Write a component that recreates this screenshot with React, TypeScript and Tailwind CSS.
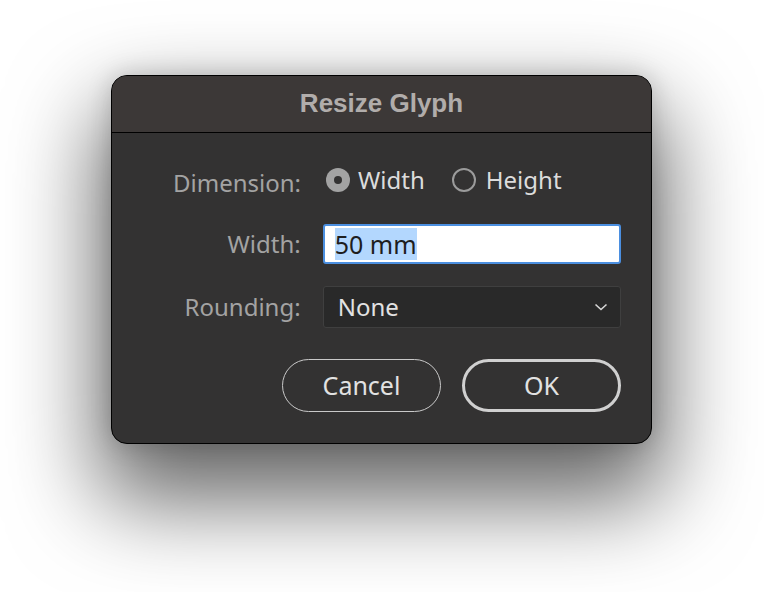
export default function App() {
  return (
    <div className="w-[764px] h-[592px] bg-white overflow-hidden pt-[75px] pl-[111px] font-['Noto_Sans',sans-serif]">
      <div className="w-[541px] h-[369px] rounded-[16px] bg-[#333232] border border-black shadow-[0_45px_90px_12px_rgba(0,0,0,0.6),0_0_24px_rgba(0,0,0,0.18)] overflow-hidden flex flex-col">
        {/* Title bar */}
        <div className="h-[57px] shrink-0 bg-[#3c3837] border-b border-black flex items-center justify-center">
          <span className="text-[26px] font-bold text-[#b1adab] font-['Liberation_Sans',sans-serif] pb-[2px]">
            Resize Glyph
          </span>
        </div>

        <div className="flex flex-col pl-[40px] pr-[30px]">
          {/* Dimension */}
          <div className="flex items-center mt-[33px] h-[28px]">
            <span className="w-[149px] text-right text-[24px] text-[#a3a3a3] pt-[6px]">Dimension:</span>
            <div className="ml-[25px] flex items-center">
              <span className="w-[24px] h-[24px] rounded-full bg-[#a3a3a3] flex items-center justify-center">
                <span className="w-[8px] h-[8px] rounded-full bg-[#333232]" />
              </span>
              <span className="ml-[8px] text-[24px] text-[#dcdcdc]">Width</span>
              <span className="ml-[27px] w-[24px] h-[24px] rounded-full border-2 border-[#9b9b9b]" />
              <span className="ml-[10px] text-[24px] text-[#dcdcdc]">Height</span>
            </div>
          </div>

          {/* Width */}
          <div className="flex items-center mt-[30px]">
            <span className="w-[149px] text-right text-[24px] text-[#a3a3a3]">Width:</span>
            <div className="ml-[22px] w-[299px] h-[40px] rounded-[3px] bg-white border-2 border-[#4b8fe0] flex items-center pl-[10px]">
              <span className="bg-[#b3d7fe] text-[25px] leading-[32px] text-[#1e1e1e]">50 mm</span>
            </div>
          </div>

          {/* Rounding */}
          <div className="flex items-center mt-[22px]">
            <span className="w-[149px] text-right text-[24px] text-[#a3a3a3]">Rounding:</span>
            <div className="ml-[22px] w-[299px] h-[42px] rounded-[3px] bg-[#292929] border border-[#3f3f3f] flex items-center justify-between pl-[14px] pr-[12px]">
              <span className="text-[24px] text-[#e2e2e2]">None</span>
              <svg width="14" height="8" viewBox="0 0 14 8" fill="none">
                <path d="M1.5 1.5 L7 6.5 L12.5 1.5" stroke="#d6d6d6" strokeWidth="1.6" />
              </svg>
            </div>
          </div>

          {/* Buttons */}
          <div className="flex justify-end gap-[21px] mt-[31px]">
            <button className="w-[159px] h-[53px] rounded-full border-[1.5px] border-[#c9c9c9] text-[25px] text-[#e2e2e2]">
              Cancel
            </button>
            <button className="w-[159px] h-[53px] rounded-full border-[3px] border-[#d0d0d0] text-[25px] text-[#e2e2e2]">
              OK
            </button>
          </div>
        </div>
      </div>
    </div>
  )
}
